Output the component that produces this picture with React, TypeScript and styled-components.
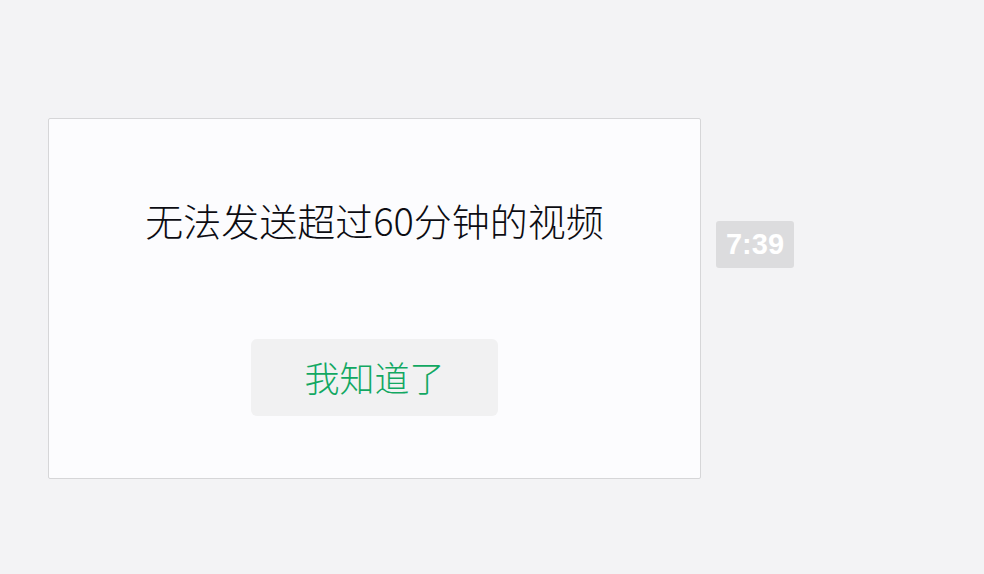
import React from "react";
import styled, { createGlobalStyle } from "styled-components";

const Global = createGlobalStyle`
  html, body { margin: 0; padding: 0; background: #f3f3f5; }
  body { font-family: "Noto Sans", "Noto Sans CJK SC", sans-serif; }
`;

const Page = styled.div`
  width: 984px;
  height: 574px;
  box-sizing: border-box;
  padding: 118px 0 0 48px;
  display: flex;
  align-items: flex-start;
  gap: 15px;
  background: #f3f3f5;
`;

const Dialog = styled.div`
  width: 653px;
  height: 361px;
  box-sizing: border-box;
  background: #fcfcfe;
  border: 1px solid #d6d6d8;
  border-radius: 2px;
  display: flex;
  flex-direction: column;
  align-items: center;
  padding-top: 77px;
`;

const Title = styled.div`
  font-family: "Noto Sans CJK SC", "Noto Sans", sans-serif;
  font-size: 38px;
  font-weight: 300;
  line-height: 48px;
  color: #0c0c12;
  letter-spacing: 0;
`;

const Button = styled.button`
  margin-top: 95px;
  width: 247px;
  height: 77px;
  border: none;
  border-radius: 6px;
  background: #f1f1f2;
  color: #12a862;
  font-family: "Noto Sans CJK SC", sans-serif;
  font-size: 35px;
  font-weight: 300;
  display: flex;
  align-items: center;
  justify-content: center;
  padding: 0 0 3px;
  cursor: pointer;
`;

const Stamp = styled.div`
  margin-top: 103px;
  width: 78px;
  height: 47px;
  background: #dcdcde;
  border-radius: 3px;
  color: #ffffff;
  font-family: "Liberation Sans", Arial, sans-serif;
  font-weight: bold;
  font-size: 29px;
  display: flex;
  align-items: center;
  justify-content: center;
`;

export default function App() {
  return (
    <>
      <Global />
      <Page>
        <Dialog>
          <Title>无法发送超过60分钟的视频</Title>
          <Button>我知道了</Button>
        </Dialog>
        <Stamp>7:39</Stamp>
      </Page>
    </>
  );
}
